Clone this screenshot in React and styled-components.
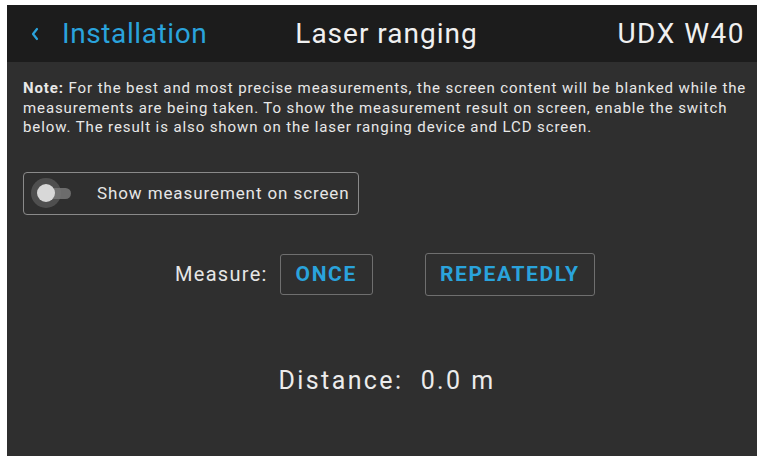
import React from "react";
import styled, { createGlobalStyle } from "styled-components";

const GlobalStyle = createGlobalStyle`
  html, body {
    margin: 0;
    padding: 0;
    background: #ffffff;
  }
  body {
    font-family: Roboto, "Liberation Sans", sans-serif;
  }
`;

const Screen = styled.div`
  margin: 5px 5px 0 7px;
  height: 451px;
  background: #2f2f2f;
  display: flex;
  flex-direction: column;
  overflow: hidden;
`;

const Header = styled.div`
  height: 57px;
  background: #1c1c1c;
  display: grid;
  grid-template-columns: 1fr auto 1fr;
  align-items: center;
  padding: 0 12px 0 23px;
  font-size: 28px;
  letter-spacing: 0.6px;
  color: #f0f0f0;
`;

const Back = styled.div`
  display: flex;
  align-items: center;
  gap: 22px;
  color: #2aa3dc;
`;

const Title = styled.div`
  text-align: center;
  letter-spacing: 1px;
  padding-right: 2px;
`;

const Model = styled.div`
  text-align: right;
  letter-spacing: 1.5px;
`;

const Body = styled.div`
  padding: 17px 4px 0 16px;
  display: flex;
  flex-direction: column;
`;

const Note = styled.p`
  margin: 0;
  font-size: 15px;
  line-height: 19.5px;
  color: #e8e8e8;
  letter-spacing: 0.9px;
  white-space: nowrap;

  b {
    font-weight: 700;
  }
`;

const ToggleBox = styled.div`
  margin-top: 34px;
  width: 336px;
  height: 43px;
  box-sizing: border-box;
  border: 1.5px solid #8a8a8a;
  border-radius: 4px;
  display: flex;
  align-items: center;
  padding-left: 7px;
  gap: 24px;
  font-size: 17px;
  letter-spacing: 0.9px;
  color: #e6e6e6;
`;

const Switch = styled.div`
  position: relative;
  width: 42px;
  height: 30px;
  flex: none;
`;

const Track = styled.div`
  position: absolute;
  left: 12px;
  top: 10px;
  width: 28px;
  height: 11px;
  border-radius: 6px;
  background: #6c6c6c;
`;

const Thumb = styled.div`
  position: absolute;
  left: 0;
  top: 0;
  width: 30px;
  height: 30px;
  border-radius: 50%;
  background: rgba(120, 120, 120, 0.45);

  &::after {
    content: "";
    position: absolute;
    left: 6px;
    top: 6px;
    width: 18px;
    height: 18px;
    border-radius: 50%;
    background: #d8d8d8;
  }
`;

const MeasureRow = styled.div`
  margin-top: 38px;
  display: flex;
  align-items: center;
  padding-left: 152px;
  font-size: 20px;
  letter-spacing: 1.3px;
  color: #e6e6e6;
`;

const Label = styled.span`
  margin-right: 12px;
`;

const Button = styled.button`
  height: ${(p) => p.$h}px;
  width: ${(p) => p.$w}px;
  margin-left: ${(p) => p.$gap}px;
  background: transparent;
  border: 1.5px solid #6f6f6f;
  border-radius: 3px;
  color: #2aa3dc;
  font-family: Roboto, "Liberation Sans", sans-serif;
  font-weight: 700;
  font-size: 21px;
  letter-spacing: 1.6px;
  padding: 0;
`;

const Distance = styled.div`
  margin-top: 70px;
  text-align: center;
  font-size: 25px;
  letter-spacing: 2.4px;
  color: #ececec;
  padding-right: 2px;
`;

export default function App() {
  return (
    <>
      <GlobalStyle />
      <Screen>
        <Header>
          <Back>
            <svg width="10" height="14" viewBox="0 0 10 14">
              <path
                d="M7 2 L3 7 L7 12"
                fill="none"
                stroke="#2aa3dc"
                strokeWidth="2.2"
                strokeLinecap="round"
                strokeLinejoin="round"
              />
            </svg>
            <span>Installation</span>
          </Back>
          <Title>Laser ranging</Title>
          <Model>UDX W40</Model>
        </Header>
        <Body>
          <Note>
            <b>Note:</b> For the best and most precise measurements, the screen
            content will be blanked while the
            <br />
            measurements are being taken. To show the measurement result on
            screen, enable the switch
            <br />
            below. The result is also shown on the laser ranging device and LCD
            screen.
          </Note>
          <ToggleBox>
            <Switch>
              <Track />
              <Thumb />
            </Switch>
            <span>Show measurement on screen</span>
          </ToggleBox>
          <MeasureRow>
            <Label>Measure:</Label>
            <Button $w={93} $h={41} $gap={0}>
              ONCE
            </Button>
            <Button $w={170} $h={43} $gap={52}>
              REPEATEDLY
            </Button>
          </MeasureRow>
          <Distance>Distance:&nbsp; 0.0 m</Distance>
        </Body>
      </Screen>
    </>
  );
}
